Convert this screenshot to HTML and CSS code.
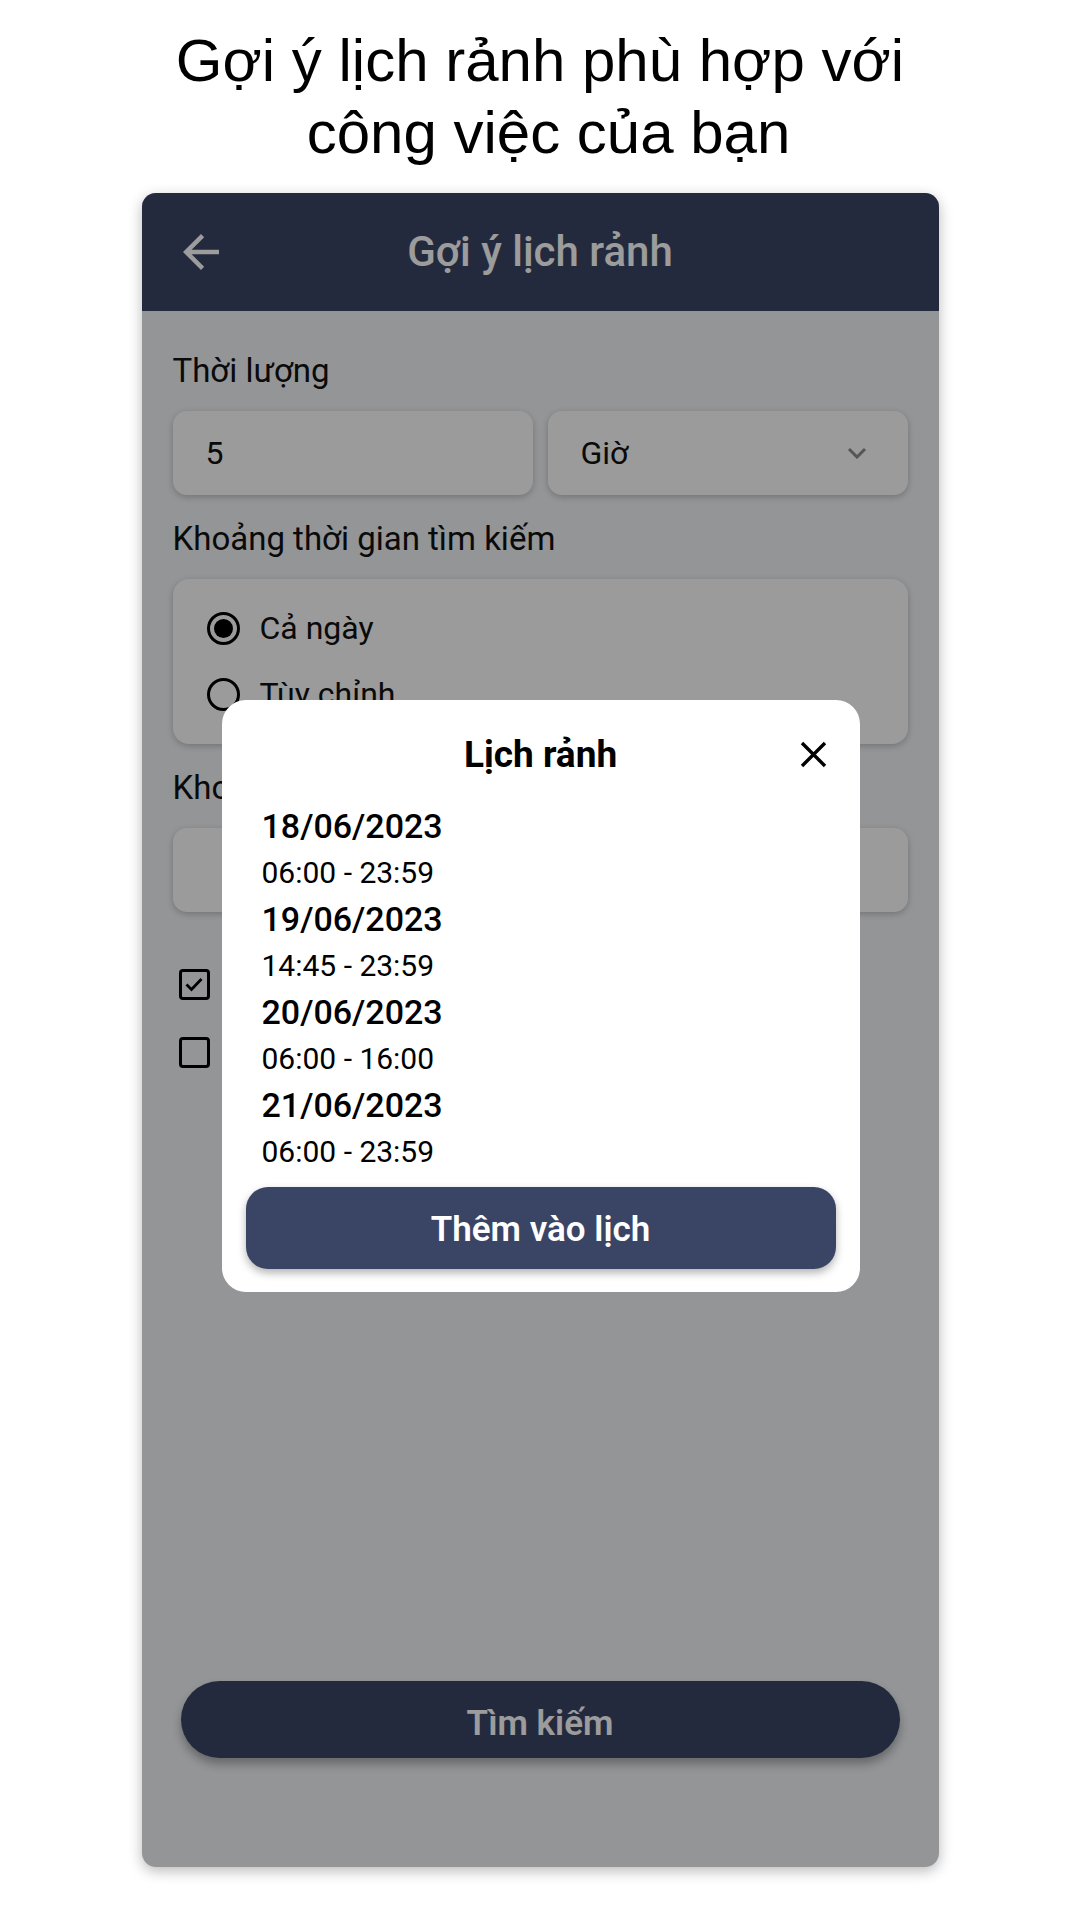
FILE: index.html
```html
<!DOCTYPE html>
<html lang="vi">
<head>
<meta charset="utf-8">
<title>Gợi ý lịch rảnh</title>
<link rel="stylesheet" href="styles.css">
</head>
<body>
<h1 class="headline">Gợi ý lịch rảnh phù hợp với<br><span class="headline-line2">công việc của bạn</span></h1>

<div class="phone">
  <header class="appbar">
    <svg class="back" viewBox="0 0 24 24" width="54" height="54" aria-hidden="true">
      <path d="M20 11H7.83l5.59-5.59L12 4l-8 8 8 8 1.41-1.41L7.83 13H20v-2z" fill="#ffffff"/>
    </svg>
    <h2 class="appbar-title">Gợi ý lịch rảnh</h2>
    <span></span>
  </header>

  <main class="form">
    <section class="section">
      <div class="label">Thời lượng</div>
      <div class="row2">
        <div class="input">5</div>
        <div class="input select">
          <span>Giờ</span>
          <svg class="chev" viewBox="0 0 20 12" width="20" height="12" aria-hidden="true">
            <polyline points="2,2 10,10 18,2" fill="none" stroke="#8b8b8b" stroke-width="3"/>
          </svg>
        </div>
      </div>
    </section>

    <section class="section">
      <div class="label">Khoảng thời gian tìm kiếm</div>
      <div class="radiobox">
        <div class="radio-row"><span class="radio on"></span><span>Cả ngày</span></div>
        <div class="radio-row"><span class="radio"></span><span>Tùy chỉnh</span></div>
      </div>
    </section>

    <section class="section">
      <div class="label">Khoảng ngày</div>
      <div class="input wide"></div>
    </section>

    <div class="checks">
      <div class="check-row" aria-label="Bỏ qua cuối tuần">
        <span class="checkbox">
          <svg viewBox="0 0 24 24" width="24" height="24" aria-hidden="true">
            <polyline points="4.5,12.5 9.5,17.5 19.5,7" fill="none" stroke="#000" stroke-width="2.8"/>
          </svg>
        </span>
      </div>
      <div class="check-row" aria-label="Chỉ giờ hành chính">
        <span class="checkbox"></span>
      </div>
    </div>

    <button class="search" type="button">Tìm kiếm</button>
  </main>

  <div class="scrim"></div>

  <div class="dialog">
    <div class="dialog-head">
      <div class="dialog-title">Lịch rảnh</div>
      <svg class="close" viewBox="0 0 27 27" width="27" height="27" aria-hidden="true">
        <path d="M2 2L25 25M25 2L2 25" stroke="#000" stroke-width="3.4" fill="none"/>
      </svg>
    </div>
    <div class="slots">
      <div class="date">18/06/2023</div>
      <div class="time">06:00 - 23:59</div>
      <div class="date">19/06/2023</div>
      <div class="time">14:45 - 23:59</div>
      <div class="date">20/06/2023</div>
      <div class="time">06:00 - 16:00</div>
      <div class="date">21/06/2023</div>
      <div class="time">06:00 - 23:59</div>
    </div>
    <button class="add" type="button">Thêm vào lịch</button>
  </div>
</div>
</body>
</html>
```

FILE: styles.css
```css
* { box-sizing: border-box; }

html, body {
  margin: 0;
  padding: 0;
  background: #ffffff;
}

body {
  width: 1080px;
  height: 1920px;
  overflow: hidden;
}

.headline {
  margin: 25px 0 0;
  font-family: "Liberation Sans", Arial, sans-serif;
  font-weight: 400;
  font-size: 60px;
  line-height: 72px;
  text-align: center;
  color: #000;
}

.headline-line2 {
  padding-left: 17px;
}

.phone {
  position: relative;
  width: 797px;
  height: 1674px;
  margin: 24px auto 0;
  border-radius: 14px;
  overflow: hidden;
  background: #f1f3f6;
  box-shadow: 0 4px 14px rgba(0, 0, 0, 0.28);
  display: flex;
  flex-direction: column;
  font-family: Roboto, "Noto Sans", sans-serif;
  color: #111;
}

.appbar {
  height: 118px;
  flex: none;
  background: #3a4566;
  display: grid;
  grid-template-columns: 1fr auto 1fr;
  align-items: center;
  padding: 0 32px;
}

.back { display: block; }

.appbar-title {
  margin: 0;
  font-size: 42px;
  font-weight: 500;
  color: #ffffff;
  line-height: 50px;
}

.form {
  flex: 1;
  display: flex;
  flex-direction: column;
  padding: 40px 31px 109px;
}

.section + .section { margin-top: 24px; }

.label {
  font-size: 33px;
  line-height: 40px;
  margin-bottom: 20px;
  color: #111;
}

.row2 {
  display: grid;
  grid-template-columns: 1fr 1fr;
  gap: 15px;
}

.input {
  height: 84px;
  background: #fdfdfd;
  border-radius: 14px;
  box-shadow: 0 2px 6px rgba(0, 0, 0, 0.22);
  display: flex;
  align-items: center;
  padding: 0 33px;
  font-size: 32px;
  color: #111;
}

.select {
  justify-content: space-between;
  padding-right: 41px;
}

.chev { display: block; }

.radiobox {
  background: #fdfdfd;
  border-radius: 16px;
  box-shadow: 0 2px 6px rgba(0, 0, 0, 0.22);
  padding: 16px 34px 17px;
}

.radio-row {
  height: 66px;
  display: flex;
  align-items: center;
  gap: 20px;
  font-size: 32px;
}

.radio {
  width: 33px;
  height: 33px;
  border: 3px solid #000;
  border-radius: 50%;
  display: flex;
  align-items: center;
  justify-content: center;
  flex: none;
}

.radio.on::after {
  content: "";
  width: 19px;
  height: 19px;
  border-radius: 50%;
  background: #000;
}

.checks {
  margin-top: 38px;
  padding-left: 6px;
}

.check-row {
  height: 68px;
  display: flex;
  align-items: center;
}

.checkbox {
  width: 31px;
  height: 31px;
  border: 3px solid #000;
  border-radius: 4px;
  display: flex;
  align-items: center;
  justify-content: center;
  flex: none;
}

.checkbox svg { display: block; }

.search {
  margin: auto 8px 0;
  height: 77px;
  padding: 8px 0 0;
  border: none;
  border-radius: 39px;
  background: #3a4566;
  color: #ffffff;
  font-family: Roboto, "Noto Sans", sans-serif;
  font-size: 35px;
  font-weight: 600;
  box-shadow: 0 6px 10px rgba(0, 0, 0, 0.3);
}

.scrim {
  position: absolute;
  inset: 0;
  background: rgba(0, 0, 0, 0.39);
}

.dialog {
  position: absolute;
  left: 80px;
  top: 507px;
  width: 638px;
  background: #ffffff;
  border-radius: 24px;
  padding: 33px 24px 23px;
}

.dialog-head {
  position: relative;
  text-align: center;
}

.dialog-title {
  font-size: 37px;
  font-weight: 700;
  line-height: 44px;
  color: #000;
}

.close {
  position: absolute;
  right: 9px;
  top: 8px;
  display: block;
}

.slots {
  margin-top: 26px;
  padding: 0 16px;
  color: #000;
}

.date {
  font-size: 34px;
  font-weight: 500;
  line-height: 46px;
}

.time {
  font-size: 30px;
  font-weight: 400;
  line-height: 47px;
}

.add {
  display: block;
  width: 100%;
  margin-top: 12px;
  height: 82px;
  padding: 2px 0 0;
  border: none;
  border-radius: 22px;
  background: #3a4566;
  color: #ffffff;
  font-family: Roboto, "Noto Sans", sans-serif;
  font-size: 35px;
  font-weight: 600;
  box-shadow: 0 4px 8px rgba(0, 0, 0, 0.3);
}
```
